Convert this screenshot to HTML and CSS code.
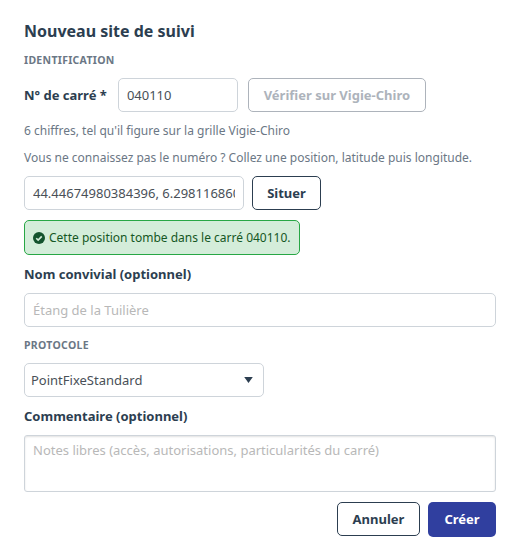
FILE: index.html
```html
<!DOCTYPE html>
<html lang="fr">
<head>
    <meta charset="UTF-8">
    <title>Nouveau site de suivi</title>
    <link rel="stylesheet" href="styles.css">
</head>
<body>
    <form class="site-form">
        <h2 class="form-title">Nouveau site de suivi</h2>

        <div class="section-label section-label-first">IDENTIFICATION</div>
        <div class="square-row">
            <label class="field-label" for="square">N° de carré *</label>
            <input id="square" class="text-input square-input" type="text" value="040110">
            <button type="button" class="btn btn-disabled">Vérifier sur Vigie-Chiro</button>
        </div>
        <p class="hint hint-first">6 chiffres, tel qu'il figure sur la grille Vigie-Chiro</p>
        <p class="hint hint-second">Vous ne connaissez pas le numéro ? Collez une position, latitude puis longitude.</p>

        <div class="locate-row">
            <input class="text-input locate-input" type="text" value="44.44674980384396, 6.298116860000001">
            <button type="button" class="btn btn-outline btn-locate">Situer</button>
        </div>

        <div class="alert-success">
            <svg class="alert-icon" viewBox="0 0 24 24">
                <circle cx="12" cy="12" r="12" fill="#14532d"/>
                <path d="M6.5 12.5l3.8 3.8 7.2-7.6" fill="none" stroke="#d4edda" stroke-width="3.2"/>
            </svg>
            <span>Cette position tombe dans le carré 040110.</span>
        </div>

        <label class="field-label field-label-block name-label" for="name">Nom convivial (optionnel)</label>
        <input id="name" class="text-input full-input" type="text" placeholder="Étang de la Tuilière">

        <div class="section-label protocol-label">PROTOCOLE</div>
        <div class="select-box">
            <span>PointFixeStandard</span>
            <svg class="select-arrow" viewBox="0 0 10 7"><path d="M0 0h10L5 7z"/></svg>
        </div>

        <label class="field-label field-label-block comment-label" for="comment">Commentaire (optionnel)</label>
        <textarea id="comment" class="text-input comment-input" placeholder="Notes libres (accès, autorisations, particularités du carré)"></textarea>

        <div class="form-actions">
            <button type="button" class="btn btn-outline btn-cancel">Annuler</button>
            <button type="button" class="btn btn-primary">Créer</button>
        </div>
    </form>
</body>
</html>
```

FILE: styles.css
```css
* {
    margin: 0;
    padding: 0;
    box-sizing: border-box;
}

body {
    font-family: "Noto Sans", sans-serif;
    font-size: 13px;
    background: white;
    color: #2c3e50;
}

.site-form {
    display: flex;
    flex-direction: column;
    align-items: flex-start;
    padding: 20px 24px 0;
}

.form-title {
    font-size: 16px;
    font-weight: 700;
    line-height: 22px;
    color: #2c3e50;
}

.section-label {
    font-size: 10.5px;
    font-weight: 700;
    line-height: 14px;
    letter-spacing: 0.3px;
    color: #6b7785;
}

.section-label-first {
    margin-top: 11px;
}

.field-label {
    font-size: 13px;
    font-weight: 700;
    line-height: 18px;
    color: #2c3e50;
}

.field-label-block {
    display: block;
}

.square-row {
    display: flex;
    align-items: center;
    margin-top: 11px;
}

.text-input {
    height: 34px;
    padding: 0 8px;
    border: 1px solid #ced4da;
    border-radius: 5px;
    font-family: "Noto Sans", sans-serif;
    font-size: 13px;
    color: #495057;
    background: white;
}

.text-input::placeholder {
    color: #b8b8b8;
    opacity: 1;
}

.square-input {
    width: 120px;
    margin-left: 11px;
}

.btn {
    height: 34px;
    border-radius: 5px;
    font-family: "Noto Sans", sans-serif;
    font-size: 13px;
    font-weight: 700;
    background: white;
}

.btn-disabled {
    width: 178px;
    margin-left: 10px;
    border: 1px solid #adb3bb;
    color: #adb3bb;
}

.btn-outline {
    border: 1px solid #2c3e50;
    color: #2c3e50;
}

.btn-locate {
    width: 69px;
    margin-left: 8px;
}

.btn-cancel {
    width: 83px;
}

.btn-primary {
    width: 68px;
    height: 35px;
    padding-bottom: 1px;
    border: none;
    background: #303f9f;
    color: white;
}

.hint {
    font-size: 12px;
    line-height: 16px;
    color: #6b7785;
}

.hint-first {
    margin-top: 11px;
}

.hint-second {
    margin-top: 11px;
}

.locate-row {
    display: flex;
    margin-top: 10px;
}

.locate-input {
    width: 220px;
}

.alert-success {
    display: flex;
    align-items: center;
    gap: 4px;
    height: 35px;
    margin-top: 10px;
    padding: 0 8px;
    border: 1px solid #28a745;
    border-radius: 5px;
    background: #d4edda;
    font-size: 12px;
    color: #155724;
}

.alert-icon {
    width: 12px;
    height: 12px;
}

.name-label {
    margin-top: 10px;
}

.full-input {
    width: 472px;
    margin-top: 10px;
}

.protocol-label {
    margin-top: 11px;
}

.select-box {
    display: flex;
    align-items: center;
    justify-content: space-between;
    width: 240px;
    height: 34px;
    margin-top: 11px;
    padding: 0 10px 0 6px;
    border: 1px solid #ced4da;
    border-radius: 5px;
    color: #495057;
}

.select-arrow {
    width: 9px;
    height: 6px;
    fill: #2c3e50;
}

.comment-label {
    margin-top: 10px;
}

.comment-input {
    width: 472px;
    height: 57px;
    margin-top: 10px;
    padding: 5px 8px;
    resize: none;
    border-radius: 3px;
    box-shadow: inset 0 1px 2px rgba(0, 0, 0, 0.12);
    display: block;
}

.form-actions {
    display: flex;
    justify-content: flex-end;
    gap: 8px;
    width: 472px;
    margin-top: 10px;
}
```
